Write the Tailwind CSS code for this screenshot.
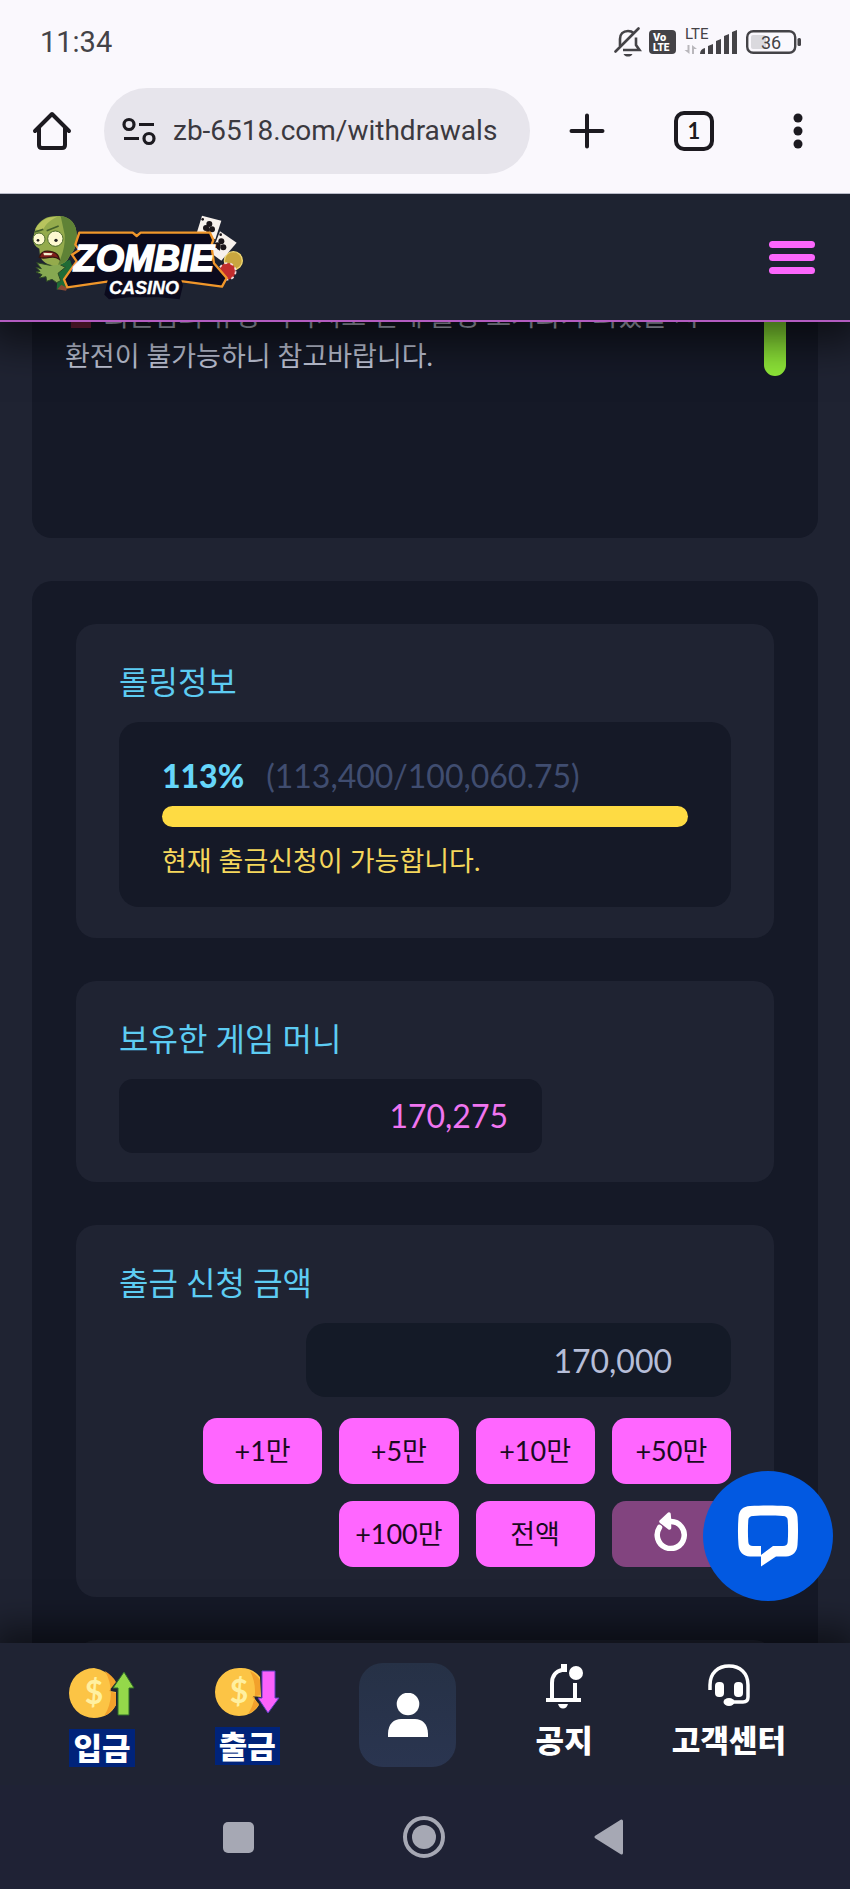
<!DOCTYPE html>
<html lang="ko">
<head>
  <meta charset="UTF-8">
  <meta name="viewport" content="width=device-width, initial-scale=1">
  <title>Zombie Casino</title>
  <script src="https://cdn.jsdelivr.net/npm/@tailwindcss/browser@4"></script>
</head>
<body class="h-screen flex flex-col overflow-hidden bg-[#1f2332] font-[Lato,'Noto_Sans_CJK_KR',sans-serif]">

  <!-- Status bar -->
  <div class="shrink-0 relative z-20 h-[84px] pl-10 pr-12 flex items-center justify-between bg-[#faf8fd] text-[#444347]">
    <span class="font-[Roboto,sans-serif] text-[29px] leading-10">11:34</span>
    <div class="flex items-center gap-[7px]">
      <svg class="w-7 h-8" viewBox="0 0 28 32" fill="none" stroke="#444347" stroke-width="2.6">
        <path d="M6 20V13c0-5 3-8 8-8 2 0 4 .5 5.500 2M22 11.500V19l3.500 5H9" />
        <path d="M1.500 25.500 24.500 2.500" stroke-linecap="round" />
        <path d="M9.500 28h9c-1 2-2.500 2.500-4.500 2.500S10.500 30 9.500 28z" fill="#444347" stroke="none" />
      </svg>
      <svg class="w-[27px] h-6" viewBox="0 0 27 24">
        <rect width="27" height="24" rx="4" fill="#444347" />
        <text x="4" y="11" font-family="Roboto" font-size="11" font-weight="900" fill="#fff">Vo</text>
        <text x="4" y="21" font-family="Roboto" font-size="10" font-weight="900" fill="#fff">LTE</text>
      </svg>
      <svg class="w-14 h-8" viewBox="0 0 56 32" fill="#444347">
        <text x="2" y="13" font-family="Roboto" font-size="15">LTE</text>
        <path d="M6.500 19v9l-5-4h3v-5zM9 28v-9l5 4h-3v5z" fill="#b9b7bc" />
        <path d="M17 28c0-3.500 2-5.500 5-6v6zM25 20l5-2v10h-5zM33 15l5-2v15h-5zM41 10l5-2v20h-5zM49 6l5-2v24h-5z" />
      </svg>
      <svg class="w-14 h-6" viewBox="0 0 56 24">
        <rect x="1.200" y="1.200" width="48" height="21.600" rx="6" fill="none" stroke="#444347" stroke-width="2.400" />
        <rect x="5" y="5" width="15" height="14" rx="2" fill="#dad9de" />
        <rect x="51.500" y="8" width="3.500" height="8" rx="1.500" fill="#444347" />
        <text x="25" y="18.500" text-anchor="middle" font-family="Roboto" font-size="18" fill="#444347">36</text>
      </svg>
    </div>
  </div>

  <!-- Browser toolbar -->
  <div class="shrink-0 relative z-20 h-[110px] pl-8 pr-9 pb-4 flex items-center bg-[#faf8fd] border-b border-[#b9bbc8] text-[#1c1a20]">
    <button type="button" aria-label="Home" class="mr-8">
      <svg class="w-10 h-10" viewBox="0 0 40 40" fill="none" stroke="currentColor" stroke-width="4" stroke-linecap="round" stroke-linejoin="round">
        <path d="M3 20 20 3l17 17M7 17v17q0 3 3 3h20q3 0 3-3V17" />
      </svg>
    </button>
    <div class="flex-1 h-[86px] rounded-full bg-[#e7e5ec] pl-[17px] flex items-center">
      <svg class="w-9 h-8 mr-4 shrink-0" viewBox="0 0 36 32" fill="none" stroke="currentColor" stroke-width="3.200">
        <circle cx="8" cy="9.500" r="5" /><path d="M18 9.500h15M3 23.500h15" /><circle cx="28" cy="23.500" r="5" />
      </svg>
      <input type="text" aria-label="Address" value="zb-6518.com/withdrawals" class="w-full min-w-0 bg-transparent outline-none font-[Roboto,sans-serif] text-[28px] leading-10 text-[#3b393f]">
    </div>
    <button type="button" aria-label="New tab" class="ml-[37px]">
      <svg class="w-10 h-10" viewBox="0 0 40 40" stroke="currentColor" stroke-width="4" stroke-linecap="round"><path d="M20 4.500v31M4.500 20h31" /></svg>
    </button>
    <button type="button" aria-label="Tabs" class="ml-[67px] w-10 h-10 rounded-[10px] border-4 border-[#1c1a20] font-[Lato,sans-serif] text-[22px] leading-8 font-bold">1</button>
    <button type="button" aria-label="Menu" class="ml-[68px]">
      <svg class="w-8 h-10" viewBox="0 0 32 40" fill="currentColor"><circle cx="16" cy="7" r="4.500" /><circle cx="16" cy="20" r="4.500" /><circle cx="16" cy="33" r="4.500" /></svg>
    </button>
  </div>

  <!-- Site header -->
  <header class="shrink-0 relative z-10 h-32 px-8 flex items-center justify-between bg-[#1e2331] border-b-2 border-[#b35cc0] shadow-[0_8px_40px_12px_rgba(0,0,0,0.6)]">
    <a href="#" aria-label="Zombie Casino">
      <svg class="w-53 h-[86px]" viewBox="96 66 636 258">
        <!-- zombie -->
        <path d="M175 215l35-12 20 60-30 25-30 5z" fill="#1f6b36" />
        <path d="M172 292l12-14 18 10-4 8z" fill="#8a4a35" />
        <path d="M110 212l14 18-16-4 12 12-12 2 18 8-8 10 20-4 2 14 16-6 14 10 12-6-8-22 22-18-24-12-22 6z" fill="#86a851" stroke="#2e4a25" stroke-width="3" />
        <path d="M106 110c14-30 40-40 72-38 34 2 52 24 52 58 0 30-6 46-20 60-8 20-24 30-44 30-22 0-40-10-46-28l-2-22c-14-6-20-20-18-34z" fill="#94ab4c" />
        <path d="M182 72c34 4 48 28 48 58 0 30-6 46-20 60-8 18-20 26-36 28 14-30 22-60 20-90z" fill="#5f8236" />
        <path d="M106 112c16-30 40-38 66-38-26 12-40 28-44 44z" fill="#b8c45e" />
        <path d="M104 120l26-8M140 116l36-14" stroke="#43602a" stroke-width="5" />
        <circle cx="117" cy="141" r="18" fill="#fdf9d0" stroke="#4c6a2c" stroke-width="3" />
        <circle cx="166" cy="140" r="23" fill="#fdf9d0" stroke="#4c6a2c" stroke-width="3" />
        <circle cx="114" cy="145" r="4" fill="#222" /><circle cx="168" cy="145" r="5" fill="#222" />
        <path d="M118 196c4-16 18-20 32-18 16 2 26 10 28 24-10-8-18-8-28-6-12 2-22 4-32 0z" fill="#7e1e1b" stroke="#34170f" stroke-width="4" />
        <path d="M130 182l28 2-4 6h-22z" fill="#f3efcf" />
        <!-- cards and chips -->
        <circle cx="700" cy="206" r="27" fill="#c9a63f" stroke="#f0d873" stroke-width="4" />
        <circle cx="682" cy="238" r="25" fill="#c22d2d" stroke="#f4dcdc" stroke-width="5" stroke-dasharray="9 9" />
        <path d="M606 71l58 15-18 56-56-18z" fill="#f7f1ec" />
        <path d="M660 118l50 34-46 54-30-22z" fill="#f7f1ec" />
        <g fill="#1b1519">
          <circle cx="628" cy="96" r="9" /><circle cx="618" cy="108" r="9" /><circle cx="636" cy="112" r="9" /><path d="M626 104l4 18-12-2z" />
          <circle cx="664" cy="148" r="9" /><circle cx="652" cy="160" r="9" /><circle cx="670" cy="166" r="9" /><path d="M662 156l-2 20-10-6z" />
          <circle cx="608" cy="82" r="4" /><circle cx="662" cy="128" r="4" />
        </g>
        <!-- plate -->
        <path d="M238 122h160l12 10 12-10h208l10 22-6 16 8 54 38 44-14 26-118-16H326l-124 18-10-24 38-54-14-20 22-14-12-16z" fill="#0b0a1d" stroke="#f0962a" stroke-width="7" stroke-linejoin="round" />
        <path d="M325 256h216l8 24-10 42-60-6h-90l-62 6-14-14z" fill="#0b0a1d" />
        <g fill="#fff" stroke="#fff" font-family="'Liberation Sans',sans-serif" font-weight="bold" font-style="italic" text-anchor="middle">
          <text x="432" y="236" font-size="108" stroke-width="5">ZOMBIE</text>
          <text x="432" y="306" font-size="54" stroke-width="1">CASINO</text>
        </g>
      </svg>
    </a>
    <button type="button" aria-label="메뉴" class="w-[49px] pr-[3px] flex flex-col gap-1.5">
      <span class="h-[7px] rounded-full bg-[#fc66fc]"></span>
      <span class="h-[7px] rounded-full bg-[#fc66fc]"></span>
      <span class="h-[7px] rounded-full bg-[#fc66fc]"></span>
    </button>
  </header>

  <!-- Scrolled page content -->
  <main class="flex-1 min-h-0 overflow-hidden px-8">
    <section class="-mt-[26px] pb-[162px] pl-[33px] pr-8 flex justify-between rounded-b-[20px] bg-[#151927]">
      <p class="text-[27px] leading-10 text-[#bfc4d6]">
        <span class="inline-block w-5 h-5 mx-1.5 align-[-2px] bg-[#7c2440]"></span> 회원님의 규정 미숙지로 인해 롤링 초기화가 되었을 시<br>환전이 불가능하니 참고바랍니다.
      </p>
      <div class="w-[22px] rounded-b-full bg-[#8ee638]"></div>
    </section>

    <form class="mt-[43px] px-11 py-[43px] flex flex-col gap-[43px] rounded-[20px] bg-[#151927]">
      <!-- Rolling info -->
      <section class="px-[43px] pt-[38px] pb-[31px] rounded-[20px] bg-[#1f2332]">
        <h2 class="mb-5 text-[32px] leading-10 text-[#5dccf2]">롤링정보</h2>
        <div class="px-[43px] pt-8 pb-[26px] rounded-[20px] bg-[#151927]">
          <div class="flex gap-[22px] text-[32px] leading-11">
            <strong class="font-black text-[#66d6fa]">113%</strong>
            <span class="text-[#404d70]">(113,400/100,060.75)</span>
          </div>
          <div class="mt-2 h-[21px] rounded-full bg-[#fedb43]"></div>
          <p class="mt-3.5 text-[27px] leading-10 text-[#f5d75c]">현재 출금신청이 가능합니다.</p>
        </div>
      </section>

      <!-- Balance -->
      <section class="px-[43px] pt-[38px] pb-[29px] rounded-[20px] bg-[#1f2332]">
        <h2 class="mb-5 text-[32px] leading-10 text-[#5dccf2]">보유한 게임 머니</h2>
        <output class="block w-[423px] max-w-full pr-[34px] rounded-[14px] bg-[#151927] text-right text-[32px] leading-[74px] text-[#f075f0]">170,275</output>
      </section>

      <!-- Amount -->
      <section class="px-[43px] pt-[38px] pb-[30px] rounded-[20px] bg-[#1f2332]">
        <label for="amount" class="block mb-5 text-[32px] leading-10 text-[#5dccf2]">출금 신청 금액</label>
        <div class="flex flex-col items-end gap-[21px]">
          <input type="text" id="amount" name="amount" value="170,000" class="w-[425px] max-w-full h-[74px] pr-[59px] rounded-[20px] bg-[#141a27] text-right text-[32px] text-[#b6bed8] outline-none">
          <div class="w-[528px] max-w-full grid grid-cols-4 gap-[17px] text-[27px] text-[#1a0a1e]">
            <button type="button" class="h-[66px] rounded-[14px] bg-[#ff66ff]">+1만</button>
            <button type="button" class="h-[66px] rounded-[14px] bg-[#ff66ff]">+5만</button>
            <button type="button" class="h-[66px] rounded-[14px] bg-[#ff66ff]">+10만</button>
            <button type="button" class="h-[66px] rounded-[14px] bg-[#ff66ff]">+50만</button>
            <button type="button" class="h-[66px] rounded-[14px] bg-[#ff66ff] col-start-2">+100만</button>
            <button type="button" class="h-[66px] rounded-[14px] bg-[#ff66ff]">전액</button>
            <button type="button" aria-label="초기화" class="h-[66px] rounded-[14px] bg-[#82447f] flex items-center justify-center">
              <svg class="w-9 h-10 mb-1.5" viewBox="0 0 36 40" fill="none" stroke="#fff" stroke-width="5.500" stroke-linecap="round">
                <path d="M6.500 16.500A13.500 13.500 0 1 0 18 10.500" />
                <path d="M16 3 8 10.500l8.500 6.500V9z" fill="#fff" stroke-width="3.500" stroke-linejoin="round" />
              </svg>
            </button>
          </div>
        </div>
      </section>

      <section class="h-40 rounded-[20px] bg-[#1f2332]"></section>
    </form>
  </main>

  <!-- Live chat -->
  <button type="button" aria-label="Chat" class="fixed z-20 right-[17px] bottom-[288px] size-[130px] rounded-full bg-[#0259e1] flex items-center justify-center">
    <svg class="size-[62px]" viewBox="0 0 62 62">
      <path fill="#fff" fill-rule="evenodd" d="M13 1C24 .2 38 .2 49 1c7 .5 11 5 11.500 11 .7 9 .7 19 0 28C60 47 56 51 49 51.500H39L24 61.500V51.500H13C6 51 2 47 1.500 40 .8 31 .8 21 1.500 12 2 5 6 1.500 13 1zM16 11c-3 .2-4.500 1.500-4.700 4-.5 7-.5 15 0 22 .2 2.500 1.700 4 4.700 4h8v9l12-9h10c3 0 4.500-1.500 4.700-4 .5-7 .5-15 0-22-.2-2.500-1.700-3.800-4.700-4-10-.6-20-.6-30 0z" />
    </svg>
  </button>

  <!-- Bottom navigation -->
  <nav class="shrink-0 relative z-10 h-[142px] pt-5 pl-[69px] pr-16 flex items-start justify-between bg-[#1f2333] text-white text-[31px] leading-[38px] font-black shadow-[0_-8px_32px_8px_rgba(0,0,0,0.5)]">
    <a href="#" class="w-[66px] pt-1 flex flex-col items-center gap-2.5">
      <svg class="w-[66px] h-[52px]" viewBox="0 0 66 52">
        <path d="M25 1a25 25 0 1 0 0 50c10 0 18-5 22-13V25l-6-1 3-10A25 25 0 0 0 25 1z" fill="#fcc445" />
        <path d="M36 4c5 3 9 7 11 11l-7 9 7 2v12c-3 5-7 9-12 11 9-13 9-31 1-45z" fill="#f2a12c" />
        <text x="25" y="37" text-anchor="middle" font-family="Lato" font-size="32" font-weight="bold" fill="#fff0a0">$</text>
        <path d="M55 5l10 16h-5v27H49V21h-5z" fill="#94d84a" stroke="#2f6a2b" stroke-width="1" />
      </svg>
      <span class="bg-[#00237a] px-1">입금</span>
    </a>
    <a href="#" class="w-[66px] pt-1 flex flex-col items-center gap-2">
      <svg class="w-[66px] h-[52px]" viewBox="0 0 66 52">
        <path d="M25 1a24 24 0 1 0 0 48c9 0 16-4 20-11l-6-9 8 1-1-20A25 25 0 0 0 25 1z" fill="#fcc445" />
        <path d="M36 4c4 2 8 5 10 9v15l-8 2 7 7c-3 5-6 8-11 10 9-13 9-30 2-43z" fill="#f2a12c" />
        <text x="25" y="36" text-anchor="middle" font-family="Lato" font-size="32" font-weight="bold" fill="#fff0a0">$</text>
        <path d="M48 4h13v27h4L54 46 44 31h4z" fill="#fb62fb" stroke="#5b3dc0" stroke-width="1" />
      </svg>
      <span class="bg-[#00237a] px-1">출금</span>
    </a>
    <a href="#" aria-label="내 정보" class="w-[97px] h-[104px] rounded-[24px] bg-linear-to-b from-[#263146] to-[#2a3550] flex items-center justify-center">
      <svg class="w-10 h-11" viewBox="0 0 40 44" fill="#fff"><circle cx="20" cy="11" r="11.300" /><path d="M0 44v-3C0 31 6 26 13 26h14c7 0 13 5 13 15v3z" /></svg>
    </a>
    <a href="#" class="flex flex-col items-center gap-3">
      <svg class="w-10 h-[46px]" viewBox="0 0 40 46" fill="none" stroke="#fff" stroke-width="4">
        <path d="M2 37h35M8 37V20c0-7 4-12 10-13h4M31 20v17" /><path d="M18 2h4v6h-4z" fill="#fff" stroke-width="2" />
        <circle cx="32" cy="10" r="7" fill="#fff" stroke="none" /><path d="M14 41h10c-1 3-2.500 4.500-5 4.500s-4-1.500-5-4.500z" fill="#fff" stroke="none" />
      </svg>
      <span>공지</span>
    </a>
    <a href="#" class="flex flex-col items-center gap-3">
      <svg class="w-[42px] h-[46px]" viewBox="0 0 42 46" fill="none" stroke="#fff" stroke-width="3.500">
        <path d="M2 27v-5C2 10 10 3 21 3s19 7 19 19v12q0 5-5 5H22" />
        <rect x="7" y="19" width="9" height="15" rx="4" fill="#fff" stroke="none" /><rect x="26" y="19" width="9" height="15" rx="4" fill="#fff" stroke="none" />
        <ellipse cx="21" cy="39" rx="5.500" ry="4" fill="#fff" stroke="none" />
      </svg>
      <span>고객센터</span>
    </a>
  </nav>

  <!-- System buttons -->
  <div class="shrink-0 relative z-10 h-[104px] pr-1 flex items-center justify-center gap-[149px] bg-[#1f2235]">
    <button type="button" aria-label="Recents" class="size-[31px] rounded-[5px] bg-[#a6a8b4]"></button>
    <button type="button" aria-label="Home" class="size-[42px] rounded-full border-4 border-[#a6a8b4] flex items-center justify-center"><span class="size-6 rounded-full bg-[#a6a8b4]"></span></button>
    <button type="button" aria-label="Back">
      <svg class="w-[30px] h-9" viewBox="0 0 30 36"><path d="M27.500 2v32L2 18z" fill="#a6a8b4" stroke="#a6a8b4" stroke-width="3" stroke-linejoin="round" /></svg>
    </button>
  </div>
</body>
</html>
